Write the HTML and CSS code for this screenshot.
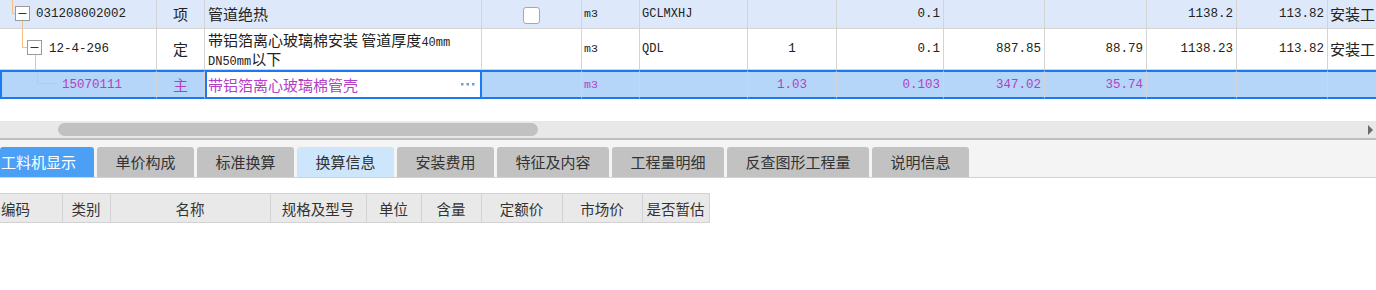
FILE: index.html
```html
<!doctype html>
<html>
<head>
<meta charset="utf-8">
<title>分部分项</title>
<link rel="stylesheet" href="styles.css">
</head>
<body>
<div id="page">

    <!-- 清单/定额 grid -->
    <div class="grid-wrap">
        <table class="grid">
            <colgroup>
                <col style="width:157px"><col style="width:48px"><col style="width:277px">
                <col style="width:100px"><col style="width:58px"><col style="width:108px">
                <col style="width:89px"><col style="width:107px"><col style="width:101px">
                <col style="width:102px"><col style="width:90px"><col style="width:91px">
                <col style="width:72px">
            </colgroup>
            <tr class="r1">
                <td class="code">
                    <div class="tree">
                        <svg width="36" height="28">
                            <path d="M12.5 0V13.5H15M22.5 21V28" class="line"/>
                            <rect x="15.5" y="6.5" width="14" height="14" class="box"/>
                            <path d="M18.5 13.5H26.5" class="minus"/>
                        </svg>
                        <span class="mono">031208002002</span>
                    </div>
                </td>
                <td class="c">项</td>
                <td class="name">管道绝热</td>
                <td class="c"><span class="check"></span></td>
                <td class="unit">m3</td>
                <td class="small">GCLMXHJ</td>
                <td class="c num"></td>
                <td class="r num">0.1</td>
                <td class="r num"></td>
                <td class="r num"></td>
                <td class="r num">1138.2</td>
                <td class="r num">113.82</td>
                <td class="name last">安装工</td>
            </tr>
            <tr class="r2">
                <td class="code">
                    <div class="tree">
                        <svg width="49" height="40">
                            <path d="M22.5 0V18.5H27M35.5 26V40" class="line"/>
                            <rect x="27.5" y="11.5" width="14" height="14" class="box"/>
                            <path d="M30.5 18.5H38.5" class="minus"/>
                        </svg>
                        <span class="mono">12-4-296</span>
                    </div>
                </td>
                <td class="c">定</td>
                <td class="name">
                    <div class="wrap">带铝箔离心玻璃棉安装 管道厚度<span class="mono">40mm</span><br><span class="mono">DN50mm</span>以下</div>
                </td>
                <td class="c"></td>
                <td class="unit">m3</td>
                <td class="small">QDL</td>
                <td class="c num">1</td>
                <td class="r num">0.1</td>
                <td class="r num">887.85</td>
                <td class="r num">88.79</td>
                <td class="r num">1138.23</td>
                <td class="r num">113.82</td>
                <td class="name last">安装工</td>
            </tr>
            <tr class="r3 selected">
                <td class="code first">
                    <div class="tree">
                        <svg width="60" height="25">
                            <path d="M35.5 0V11.5H55" class="line"/>
                        </svg>
                        <span class="mono">15070111</span>
                    </div>
                </td>
                <td class="c">主</td>
                <td class="name editing">
                    <div class="editor">
                        <span>带铝箔离心玻璃棉管壳</span>
                        <svg width="14" height="4" class="dots">
                            <rect x="0" y="0" width="2.5" height="2.5"/>
                            <rect x="5.5" y="0" width="2.5" height="2.5"/>
                            <rect x="11" y="0" width="2.5" height="2.5"/>
                        </svg>
                    </div>
                </td>
                <td class="c"></td>
                <td class="unit">m3</td>
                <td class="small"></td>
                <td class="c num">1.03</td>
                <td class="r num">0.103</td>
                <td class="r num">347.02</td>
                <td class="r num">35.74</td>
                <td class="r num"></td>
                <td class="r num"></td>
                <td class="name"></td>
            </tr>
        </table>
    </div>

    <!-- horizontal scrollbar -->
    <div class="hscroll">
        <div class="thumb"></div>
        <div class="arrow"></div>
    </div>

    <!-- detail tabs -->
    <div class="tabs">
        <div class="tab active" style="width:94px">工料机显示</div>
        <div class="tab" style="width:97px">单价构成</div>
        <div class="tab" style="width:97px">标准换算</div>
        <div class="tab light" style="width:97px">换算信息</div>
        <div class="tab" style="width:97px">安装费用</div>
        <div class="tab" style="width:112px">特征及内容</div>
        <div class="tab" style="width:112px">工程量明细</div>
        <div class="tab" style="width:142px">反查图形工程量</div>
        <div class="tab" style="width:97px">说明信息</div>
    </div>

    <!-- 工料机 header -->
    <table class="head">
        <colgroup>
            <col style="width:62px"><col style="width:48px"><col style="width:160px">
            <col style="width:96px"><col style="width:55px"><col style="width:60px">
            <col style="width:81px"><col style="width:80px"><col style="width:67px">
        </colgroup>
        <tr>
            <th class="left">编码</th>
            <th>类别</th>
            <th>名称</th>
            <th>规格及型号</th>
            <th>单位</th>
            <th>含量</th>
            <th>定额价</th>
            <th>市场价</th>
            <th>是否暂估</th>
        </tr>
    </table>

</div>
</body>
</html>
```

FILE: styles.css
```css
/*Simple reset*/
* {
    margin: 0;
    padding: 0;
    box-sizing: border-box;
}
body {
    width: 1376px;
    height: 290px;
    overflow: hidden;
    background: #fff;
    font-family: "Noto Sans CJK SC", "Noto Sans", sans-serif;
    color: #222;
}
.mono, .num, .unit, .small {
    font-family: "Liberation Mono", "DejaVu Sans Mono", monospace;
}

/* grid */
.grid-wrap {
    width: 1376px;
    overflow: hidden;
}
.grid {
    width: 1400px;
    table-layout: fixed;
    border-collapse: separate;
    border-spacing: 0;
}
.grid td {
    border-right: 1px solid #d4d4d4;
    border-bottom: 1px solid #d4d4d4;
    padding: 0 3px;
    font-size: 15px;
    line-height: 20px;
    white-space: nowrap;
    overflow: hidden;
    vertical-align: middle;
}
.grid tr.r1 td {
    height: 28px;
    background: #dde9fb;
}
.grid tr.r2 td {
    height: 40px;
    background: #fff;
}
.grid tr.r3 td {
    height: 25px;
    background: #b5d5f9;
    color: #b23fc4;
    border-top: 2px solid #1d79ef;
    border-bottom: 2px solid #1d79ef;
}
.grid tr.r3 td.first {
    border-left: 2px solid #1d79ef;
}
.grid td.code {
    padding: 0;
}
.grid td.c {
    text-align: center;
}
.grid td.r {
    text-align: right;
}
.grid td.num {
    font-size: 12.5px;
}
.grid td.unit {
    font-size: 11.5px;
    padding-left: 2px;
}
.grid td.small {
    font-size: 12px;
    padding-left: 2px;
}
.grid td.last {
    padding: 0 0 0 2px;
    text-overflow: clip;
}
.grid td.name .mono {
    font-size: 12px;
    line-height: 12px;
}
.wrap {
    white-space: normal;
    height: 38px;
    line-height: 19px;
    overflow: hidden;
}
.tree {
    display: flex;
    align-items: center;
}
.tree svg {
    display: block;
    flex: none;
}
.tree .mono {
    font-size: 12.5px;
}
.line {
    fill: none;
    stroke: #f7bf7e;
    stroke-width: 1;
}
.box {
    fill: #fff;
    stroke: #9a9a9a;
    stroke-width: 1;
}
.minus {
    stroke: #333;
    stroke-width: 1;
}
.check {
    display: inline-block;
    width: 17px;
    height: 17px;
    border: 1px solid #a8a8a8;
    border-radius: 3px;
    background: #fff;
    vertical-align: middle;
}
.grid tr.r3 td.editing {
    background: #fff;
    border: 2px solid #1d79ef;
    padding: 0 5px 0 1px;
}
.editor {
    display: flex;
    align-items: center;
    justify-content: space-between;
}
.dots rect {
    fill: #6f9fd2;
}

/* scrollbar */
.hscroll {
    margin-top: 22px;
    height: 19px;
    background: #e8e8e8;
    border-bottom: 2px solid #bebebe;
    display: flex;
    align-items: center;
    justify-content: space-between;
    padding: 0 3px 0 58px;
}
.thumb {
    width: 480px;
    height: 13px;
    border-radius: 7px;
    background: #c1c1c1;
}
.arrow {
    width: 0;
    height: 0;
    border-top: 5px solid transparent;
    border-bottom: 5px solid transparent;
    border-left: 5px solid #6b6b6b;
}

/* tabs */
.tabs {
    height: 38px;
    background: #f4f4f4;
    border-bottom: 1px solid #d2d2d2;
    display: flex;
    align-items: flex-end;
    gap: 3px;
}
.tab {
    height: 30px;
    background: #c2c2c2;
    border-radius: 3px 3px 0 0;
    font-size: 15px;
    line-height: 30px;
    text-align: center;
    color: #333;
    flex: none;
}
.tab.active {
    background: #4ba0f6;
    color: #fff;
    text-align: left;
    padding-left: 1px;
}
.tab.light {
    background: #cde6fc;
}

/* 工料机 header */
.head {
    margin-top: 15px;
    table-layout: fixed;
    width: 709px;
    border-collapse: collapse;
}
.head th {
    height: 29px;
    background: #e9e9e9;
    border: 1px solid #d2d2d2;
    border-left: none;
    font-size: 14.5px;
    font-weight: normal;
    color: #333;
    text-align: center;
    white-space: nowrap;
    overflow: hidden;
}
.head th.left {
    text-align: left;
    padding-left: 1px;
}
```
